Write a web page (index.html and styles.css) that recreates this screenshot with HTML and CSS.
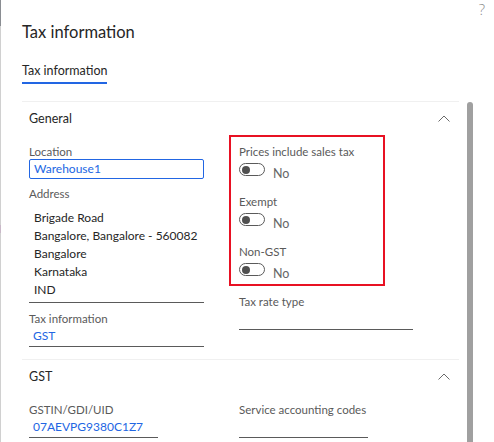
FILE: index.html
```html
<!DOCTYPE html>
<html>
<head>
<meta charset="utf-8">
<link rel="stylesheet" href="styles.css">
</head>
<body>
<div class="panel">
  <div class="edge"></div>
  <div class="main">
    <button class="help">?</button>
    <h1 class="title">Tax information</h1>
    <div class="tabs"><span class="tab active">Tax information</span></div>
    <div class="scroller">
      <div class="content">
        <section class="section">
          <div class="sec-head"><span>General</span><svg class="chev" width="12" height="7" viewBox="0 0 12 7"><path d="M0.5 6.5 L6 1 L11.5 6.5" fill="none" stroke="#6a6a6a" stroke-width="1"/></svg></div>
          <div class="sec-body">
            <div class="col col-left">
              <div class="field">
                <div class="label">Location</div>
                <div class="input focused">Warehouse1</div>
              </div>
              <div class="field f-address">
                <div class="label">Address</div>
                <div class="address">
                  <div>Brigade Road</div>
                  <div>Bangalore, Bangalore - 560082</div>
                  <div>Bangalore</div>
                  <div>Karnataka</div>
                  <div>IND</div>
                </div>
              </div>
              <div class="field f-tax">
                <div class="label">Tax information</div>
                <div class="input line link">GST</div>
              </div>
            </div>
            <div class="col col-right">
              <div class="highlight">
                <div class="tfield">
                  <div class="label">Prices include sales tax</div>
                  <div class="toggle-row"><span class="toggle"><span class="knob"></span></span><span class="tval">No</span></div>
                </div>
                <div class="tfield">
                  <div class="label">Exempt</div>
                  <div class="toggle-row"><span class="toggle"><span class="knob"></span></span><span class="tval">No</span></div>
                </div>
                <div class="tfield">
                  <div class="label">Non-GST</div>
                  <div class="toggle-row"><span class="toggle"><span class="knob"></span></span><span class="tval">No</span></div>
                </div>
              </div>
              <div class="field plain">
                <div class="label">Tax rate type</div>
                <div class="input line wide"></div>
              </div>
            </div>
          </div>
        </section>
        <section class="section">
          <div class="sec-head"><span>GST</span><svg class="chev" width="12" height="7" viewBox="0 0 12 7"><path d="M0.5 6.5 L6 1 L11.5 6.5" fill="none" stroke="#6a6a6a" stroke-width="1"/></svg></div>
          <div class="sec-body">
            <div class="col col-left">
              <div class="field">
                <div class="label">GSTIN/GDI/UID</div>
                <div class="input line link short">07AEVPG9380C1Z7</div>
              </div>
            </div>
            <div class="col col-right">
              <div class="field plain first">
                <div class="label">Service accounting codes</div>
                <div class="input line mid"></div>
              </div>
            </div>
          </div>
        </section>
      </div>
      <div class="scrollbar"><div class="thumb"></div></div>
    </div>
  </div>
</div>
</body>
</html>
```
FILE: styles.css
```css
* { box-sizing: border-box; }
html, body { margin: 0; padding: 0; background: #fff; }
body {
  width: 494px;
  height: 442px;
  overflow: hidden;
  font-family: Lato, "Open Sans", sans-serif;
  color: #262626;
}
.panel {
  display: flex;
  height: 442px;
}
.edge {
  width: 1px;
  flex: none;
  background: linear-gradient(#8a8d92 0, #8a8d92 26px, #d0d0d0 26px, #d0d0d0 225px, #c9b8c8 225px, #c9b8c8 233px, #d0d0d0 233px);
}
.main {
  position: relative;
  flex: 1;
  min-width: 0;
  padding-left: 21px;
}
.help {
  position: absolute;
  top: -1px;
  right: 9px;
  border: 0;
  background: none;
  padding: 0;
  font: 300 15px "Open Sans", sans-serif;
  color: #8a8a8a;
}
.title {
  margin: 0;
  padding-top: 21px;
  font-size: 16.5px;
  font-weight: 400;
  line-height: 22px;
  color: #262626;
}
.tabs {
  display: flex;
  align-items: flex-start;
  margin-top: 19px;
  height: 39px;
}
.tab {
  font-size: 12.5px;
  line-height: 18px;
  padding-bottom: 2px;
  border-bottom: 2px solid #2266e3;
  color: #262626;
}
.scroller {
  display: flex;
  height: 341px;
}
.content {
  width: 437px;
  flex: none;
  border-top: 1px solid #f0f0f0;
}
.scrollbar {
  width: 6px;
  margin-left: 8px;
  padding-top: 1px;
}
.thumb {
  width: 6px;
  height: 100%;
  background: #a0a0a0;
  border-radius: 3px 3px 0 0;
}
.section + .section {
  border-top: 1px solid #f0f0f0;
}
.sec-head {
  display: flex;
  justify-content: space-between;
  align-items: center;
  height: 32px;
  padding: 0 9px 0 7px;
  font-size: 12.5px;
  color: #262626;
}
.sec-body {
  display: grid;
  grid-template-columns: 175px 1fr;
  column-gap: 25px;
  padding: 0 0 12px 7px;
  align-items: start;
}
.field { margin-top: 10px; }
.f-address { margin-top: 7px; }
.f-tax { margin-top: 8px; }
.label {
  font-size: 11.5px;
  line-height: 15px;
  color: #5a5a5a;
  white-space: nowrap;
}
.input {
  height: 21px;
  font-size: 12px;
  line-height: 20px;
  padding-left: 4px;
  color: #2266e3;
  white-space: nowrap;
}
.input.focused {
  height: 20px;
  line-height: 18px;
  border: 1px solid #2266e3;
  border-radius: 2px;
}
.input.line {
  border-bottom: 1px solid #5a5a5a;
}
.input.short { width: 129px; }
.input.wide { width: 174px; }
.input.mid { width: 129px; }
.address {
  padding: 8px 0 3px 5px;
  font-size: 12px;
  line-height: 18px;
  color: #262626;
  white-space: nowrap;
  border-bottom: 1px solid #5a5a5a;
}
.highlight {
  margin-top: 1px;
  border: 2px solid #e81123;
  padding: 6.5px 8px 3.5px 8px;
  width: 156px;
}
.tfield + .tfield { margin-top: 13px; }
.plain { padding-left: 10px; margin-top: 7.5px; }
.plain.first { margin-top: 10px; }
.toggle-row {
  display: flex;
  align-items: center;
  height: 22px;
}
.toggle {
  width: 26px;
  height: 13px;
  border: 1px solid #5a5a5a;
  border-radius: 7px;
  position: relative;
  flex: none;
}
.knob {
  position: absolute;
  left: 2px;
  top: 1.5px;
  width: 8px;
  height: 8px;
  border-radius: 50%;
  background: #505050;
}
.tval {
  margin-left: 8px;
  margin-top: 8px;
  font-size: 12.5px;
  line-height: 14px;
  color: #666;
}
```
